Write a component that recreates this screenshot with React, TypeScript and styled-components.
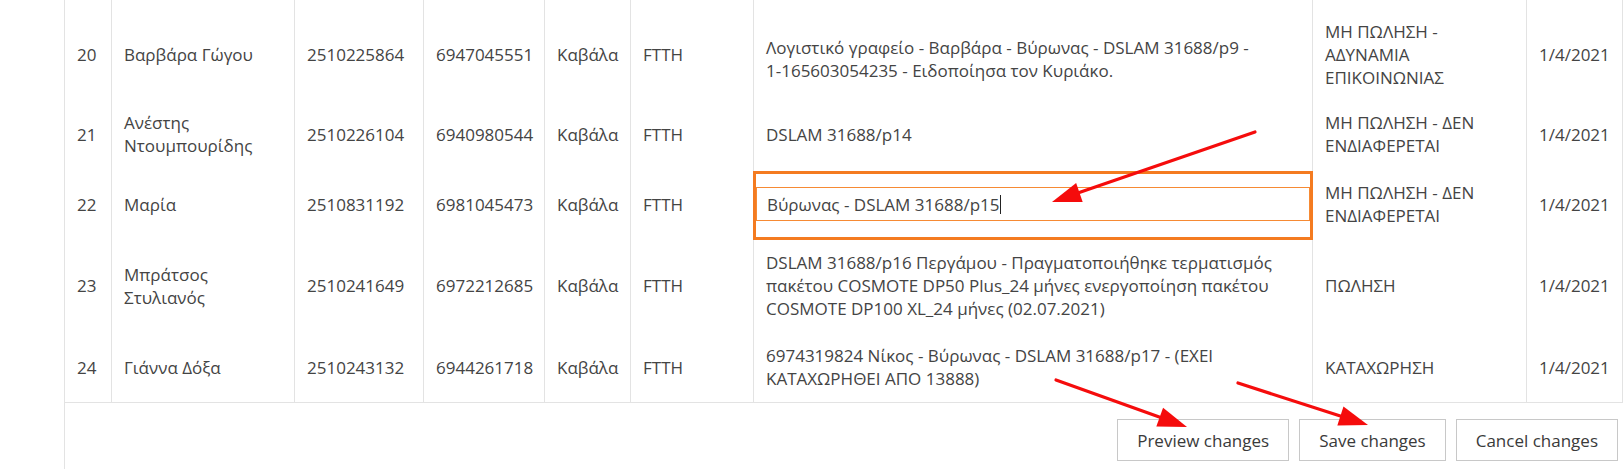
import React from "react";
import styled, { createGlobalStyle } from "styled-components";

const GlobalStyle = createGlobalStyle`
  *, *::before, *::after { box-sizing: border-box; }
  html, body { margin: 0; padding: 0; background: #fff; }
  body {
    font-family: "Open Sans", "Noto Sans", "DejaVu Sans", sans-serif;
    color: #444;
  }
`;

const LINE = "#e3e3e3";
const ORANGE = "#f47b20";
const COLS = "47px 183px 129px 121px 86px 123px 559px 214px 96px";

const Page = styled.div`
  position: relative;
  width: 1623px;
  height: 469px;
  overflow: hidden;
  padding-left: 64px;
  display: flex;
`;

const Panel = styled.div`
  flex: 1;
  border-left: 1px solid ${LINE};
  display: flex;
  flex-direction: column;
`;

const Grid = styled.div`
  display: flex;
  flex-direction: column;
  border-bottom: 1px solid ${LINE};
`;

const Row = styled.div`
  display: grid;
  grid-template-columns: ${COLS};
  &:first-child > * {
    padding-top: 20px;
    padding-bottom: 10px;
  }
`;

const Cell = styled.div`
  display: flex;
  align-items: center;
  min-width: 0;
  padding: 12px 12px;
  border-right: 1px solid ${LINE};
  font-size: 17px;
  line-height: 23px;
  color: #444;
`;

const CellText = styled.div<{ $offset?: number }>`
  padding-top: ${(p) => p.$offset ?? 0}px;
`;

const NoWrap = styled.span`
  white-space: nowrap;
`;

const EditCell = styled(Cell)`
  position: relative;
  padding: 0 2px;
  &::after {
    content: "";
    position: absolute;
    top: 2px;
    left: -1px;
    right: -1px;
    bottom: -1px;
    border: 3px solid ${ORANGE};
    pointer-events: none;
  }
`;

const EditBox = styled.div`
  width: 100%;
  height: 34px;
  display: flex;
  align-items: center;
  padding: 0 10px;
  border: 1px solid #f68a34;
  background: #fff;
  white-space: nowrap;
`;

const Caret = styled.span`
  display: inline-block;
  width: 1px;
  height: 19px;
  margin-left: 1px;
  background: #222;
`;

const Actions = styled.div`
  display: flex;
  justify-content: flex-end;
  gap: 10px;
  padding: 16px 5px 0 0;
`;

const Button = styled.button`
  height: 42px;
  padding: 0 19px;
  border: 1px solid #c8c8c8;
  background: #fff;
  font-family: inherit;
  font-size: 17px;
  color: #3a3a3a;
  cursor: pointer;
`;

const Overlay = styled.svg`
  position: absolute;
  left: 0;
  top: 0;
  pointer-events: none;
`;

type RowData = {
  n: number;
  name: string;
  phone: string;
  mobile: string;
  city: string;
  tech: string;
  desc: React.ReactNode;
  descOffset?: number;
  status: string;
  date: string;
  editing?: boolean;
};

const rows: RowData[] = [
  {
    n: 20,
    name: "Βαρβάρα Γώγου",
    phone: "2510225864",
    mobile: "6947045551",
    city: "Καβάλα",
    tech: "FTTH",
    desc: (
      <>
        Λογιστικό γραφείο - Βαρβάρα - Βύρωνας - DSLAM 31688/p9 - <NoWrap>1-165603054235</NoWrap> - Ειδοποίησα τον
        Κυριάκο.
      </>
    ),
    descOffset: 8,
    status: "ΜΗ ΠΩΛΗΣΗ - ΑΔΥΝΑΜΙΑ ΕΠΙΚΟΙΝΩΝΙΑΣ",
    date: "1/4/2021",
  },
  {
    n: 21,
    name: "Ανέστης Ντουμπουρίδης",
    phone: "2510226104",
    mobile: "6940980544",
    city: "Καβάλα",
    tech: "FTTH",
    desc: "DSLAM 31688/p14",
    status: "ΜΗ ΠΩΛΗΣΗ - ΔΕΝ ΕΝΔΙΑΦΕΡΕΤΑΙ",
    date: "1/4/2021",
  },
  {
    n: 22,
    name: "Μαρία",
    phone: "2510831192",
    mobile: "6981045473",
    city: "Καβάλα",
    tech: "FTTH",
    desc: "Βύρωνας - DSLAM 31688/p15",
    status: "ΜΗ ΠΩΛΗΣΗ - ΔΕΝ ΕΝΔΙΑΦΕΡΕΤΑΙ",
    date: "1/4/2021",
    editing: true,
  },
  {
    n: 23,
    name: "Μπράτσος Στυλιανός",
    phone: "2510241649",
    mobile: "6972212685",
    city: "Καβάλα",
    tech: "FTTH",
    desc: "DSLAM 31688/p16 Περγάμου - Πραγματοποιήθηκε τερματισμός πακέτου COSMOTE DP50 Plus_24 μήνες ενεργοποίηση πακέτου COSMOTE DP100 XL_24 μήνες (02.07.2021)",
    status: "ΠΩΛΗΣΗ",
    date: "1/4/2021",
  },
  {
    n: 24,
    name: "Γιάννα Δόξα",
    phone: "2510243132",
    mobile: "6944261718",
    city: "Καβάλα",
    tech: "FTTH",
    desc: "6974319824 Νίκος - Βύρωνας - DSLAM 31688/p17 - (ΕΧΕΙ ΚΑΤΑΧΩΡΗΘΕΙ ΑΠΟ 13888)",
    status: "ΚΑΤΑΧΩΡΗΣΗ",
    date: "1/4/2021",
  },
];

const arrows = [
  { x1: 1255, y1: 132, x2: 1052, y2: 202 },
  { x1: 1056, y1: 380, x2: 1187, y2: 427 },
  { x1: 1238, y1: 383, x2: 1368, y2: 425 },
];

function Arrow({ x1, y1, x2, y2 }: { x1: number; y1: number; x2: number; y2: number }) {
  const dx = x2 - x1;
  const dy = y2 - y1;
  const len = Math.hypot(dx, dy);
  const ux = dx / len;
  const uy = dy / len;
  const head = 29;
  const half = 10;
  const bx = x2 - ux * head;
  const by = y2 - uy * head;
  const px = -uy;
  const py = ux;
  const pts = `${x2},${y2} ${bx + px * half},${by + py * half} ${bx - px * half},${by - py * half}`;
  return (
    <g>
      <line x1={x1} y1={y1} x2={bx + ux * 4} y2={by + uy * 4} stroke="#f50c0c" strokeWidth={3.2} strokeLinecap="round" />
      <polygon points={pts} fill="#f50c0c" />
    </g>
  );
}

export default function App() {
  return (
    <>
      <GlobalStyle />
      <Page>
        <Panel>
          <Grid>
            {rows.map((r) => (
              <Row key={r.n}>
                <Cell>{r.n}</Cell>
                <Cell>{r.name}</Cell>
                <Cell>{r.phone}</Cell>
                <Cell>{r.mobile}</Cell>
                <Cell>{r.city}</Cell>
                <Cell>{r.tech}</Cell>
                {r.editing ? (
                  <EditCell>
                    <EditBox>
                      {r.desc}
                      <Caret />
                    </EditBox>
                  </EditCell>
                ) : (
                  <Cell>
                    <CellText $offset={r.descOffset}>{r.desc}</CellText>
                  </Cell>
                )}
                <Cell>{r.status}</Cell>
                <Cell>{r.date}</Cell>
              </Row>
            ))}
          </Grid>
          <Actions>
            <Button>Preview changes</Button>
            <Button>Save changes</Button>
            <Button>Cancel changes</Button>
          </Actions>
        </Panel>
        <Overlay width={1623} height={469} viewBox="0 0 1623 469">
          {arrows.map((a, i) => (
            <Arrow key={i} {...a} />
          ))}
        </Overlay>
      </Page>
    </>
  );
}
